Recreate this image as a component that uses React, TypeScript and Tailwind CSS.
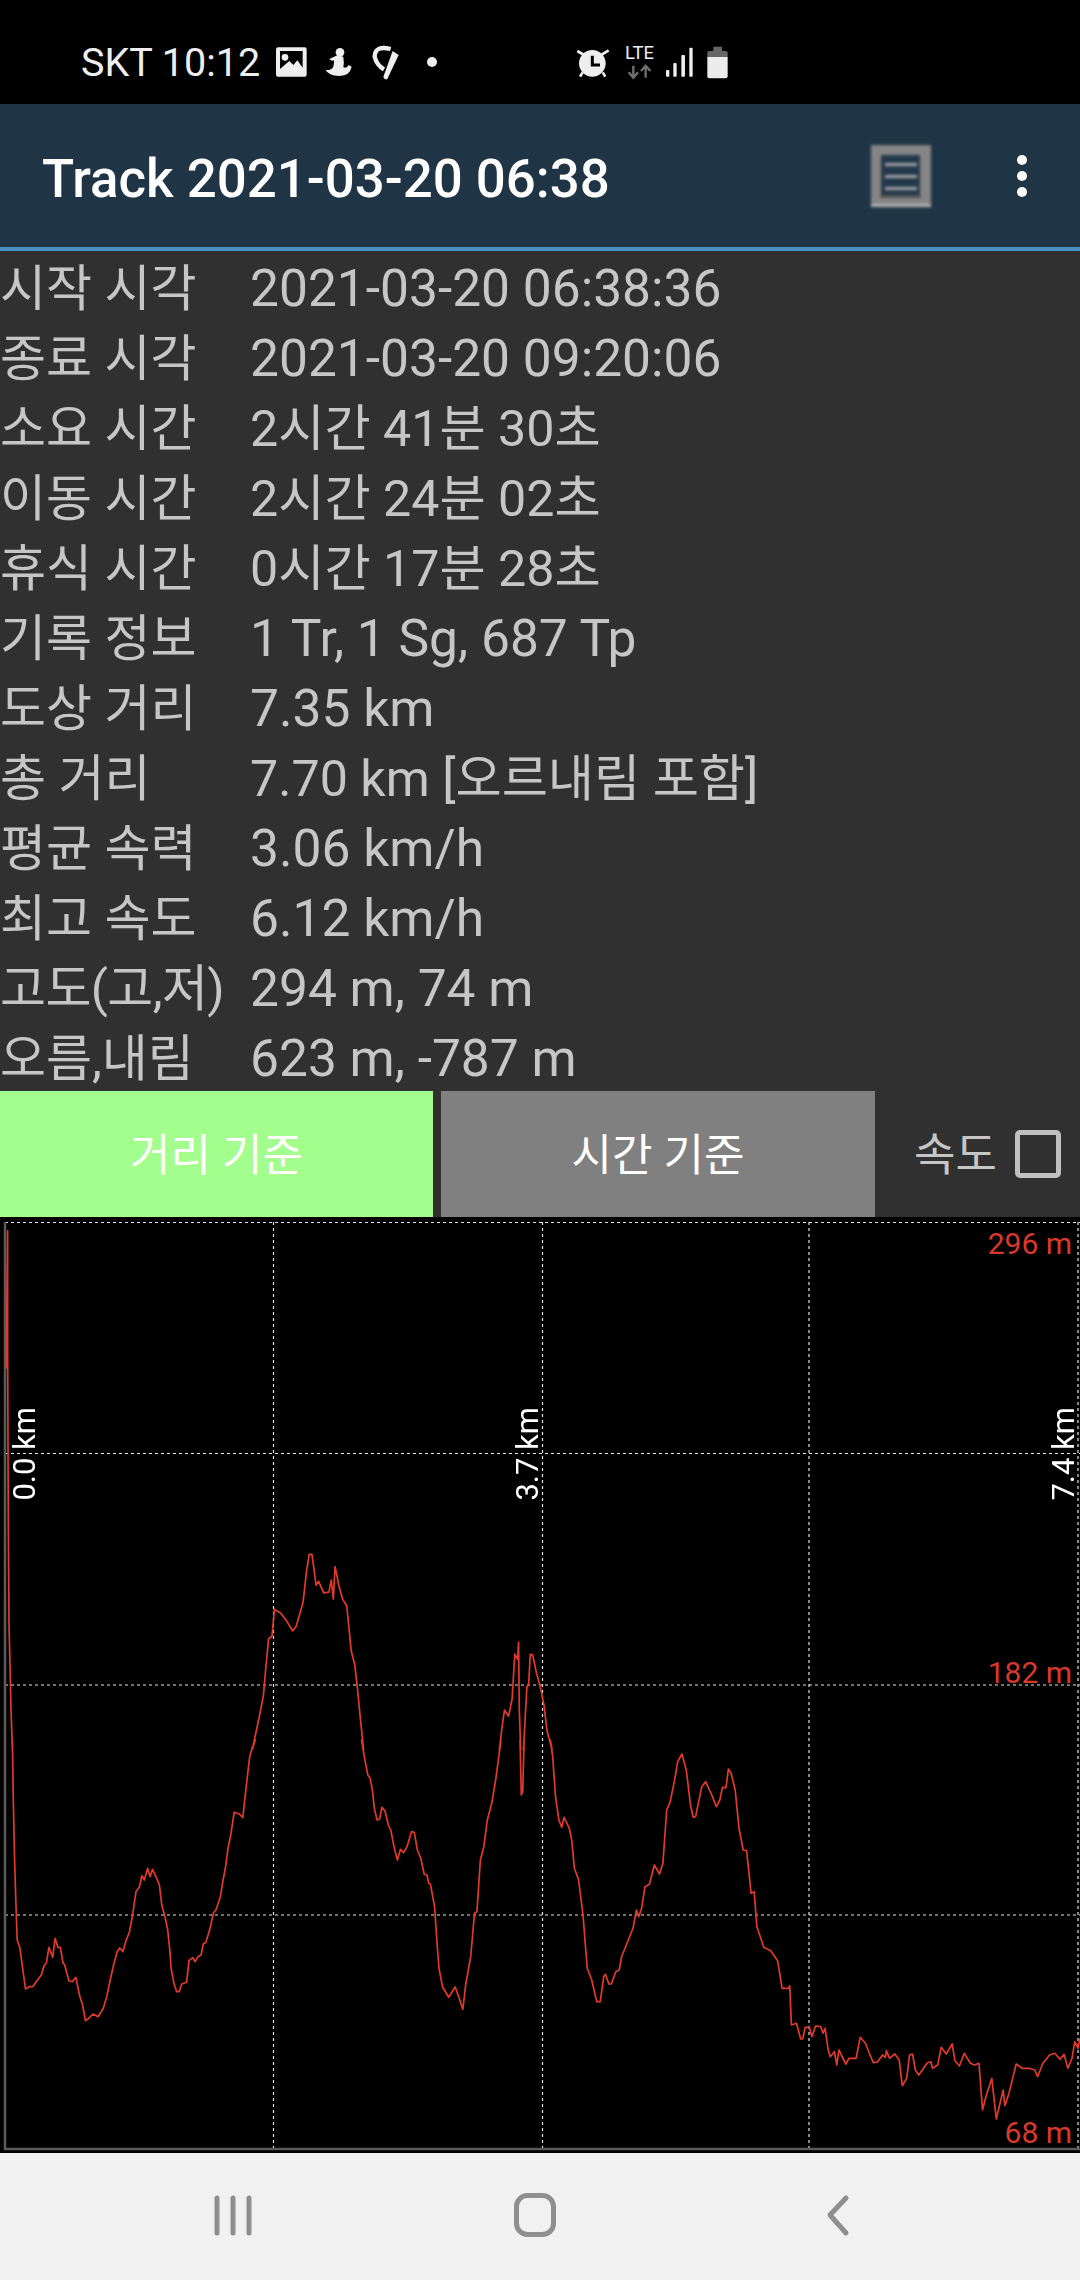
const rows = [
  ["시작 시각", "2021-03-20 06:38:36"],
  ["종료 시각", "2021-03-20 09:20:06"],
  ["소요 시간", "2시간 41분 30초"],
  ["이동 시간", "2시간 24분 02초"],
  ["휴식 시간", "0시간 17분 28초"],
  ["기록 정보", "1 Tr, 1 Sg, 687 Tp"],
  ["도상 거리", "7.35 km"],
  ["총 거리", "7.70 km [오르내림 포함]"],
  ["평균 속력", "3.06 km/h"],
  ["최고 속도", "6.12 km/h"],
  ["고도(고,저)", "294 m, 74 m"],
  ["오름,내림", "623 m, -787 m"],
];

// traced from the crops, so each run carries its own scale and offset
const CHART_TOP = 1217;
const runs: { sx: number; ox: number; sy: number; oy: number; pts: number[] }[] = [
  { sx: 2.904, ox: 0, sy: 2.904, oy: 1210, pts: [18,460, 22,60, 22,400, 24,900, 26,1200, 32,1450, 36,1568] },
  { sx: 2.904, ox: 0, sy: 3, oy: 1740, pts: [36,0, 38,150, 42,350, 46,480, 50,600, 58,625, 65,680, 74,747, 85,740, 95,740, 105,725, 120,705, 128,677, 135,668, 142,622, 153,652, 160,595, 168,622, 175,622, 183,668, 188,675, 200,722, 210,725, 220,712, 232,770, 240,795, 248,842, 258,835, 270,822, 285,830, 300,805, 310,770, 320,720, 330,675, 340,635, 348,624, 357,635, 365,605, 376,575, 385,525, 395,455, 405,440, 412,407, 419,420, 429,385, 436,410, 443,388, 455,415, 463,435, 470,495, 480,535, 487,570, 493,630, 497,685, 505,730, 513,755, 520,755, 528,732, 542,727, 549,662, 560,653, 567,665, 575,650, 584,645, 590,612, 598,607, 610,565, 620,518, 627,510, 640,470, 648,420, 655,380, 662,325, 670,285, 680,217, 695,222, 705,233, 715,140, 725,50, 732,25, 741,0] },
  { sx: 2.904, ox: 0, sy: 2.904, oy: 1210, pts: [733,1565, 745,1510, 755,1462, 765,1410, 772,1330, 780,1245, 790,1238, 797,1160, 815,1170, 830,1190, 850,1222, 860,1210, 880,1140, 890,1050, 898,1000, 906,1000, 918,1090, 925,1078, 940,1112, 955,1110, 962,1075, 968,1130, 973,1036, 985,1095, 995,1130, 1007,1150, 1020,1280, 1030,1320, 1037,1380, 1047,1480, 1056,1568] },
  { sx: 2.904, ox: 0, sy: 3, oy: 1740, pts: [1050,0, 1058,50, 1068,105, 1075,115, 1082,155, 1087,205, 1095,240, 1102,238, 1109,202, 1118,213, 1128,255, 1135,270, 1145,325, 1154,360, 1163,328, 1172,338, 1182,320, 1195,275, 1203,277, 1212,330, 1222,355, 1232,403, 1240,405, 1245,430, 1250,432, 1262,500, 1270,620, 1275,685, 1285,740, 1303,772, 1322,741, 1332,770, 1344,808, 1353,730, 1367,650, 1378,520, 1385,515, 1395,360, 1405,320, 1415,240, 1428,190, 1440,115, 1455,0] },
  { sx: 2.904, ox: 0, sy: 2.904, oy: 1210, pts: [1450,1568, 1457,1510, 1465,1452, 1477,1470, 1487,1420, 1495,1290, 1503,1305, 1506,1255, 1508,1450, 1512,1568] },
  { sx: 2.904, ox: 0, sy: 3, oy: 1740, pts: [1510,0, 1514,165, 1518,155, 1522,0] },
  { sx: 2.904, ox: 0, sy: 2.904, oy: 1210, pts: [1520,1568, 1530,1385, 1535,1380, 1540,1290, 1547,1292, 1558,1345, 1568,1380] },
  { sx: 2.904, ox: 540, sy: 2.904, oy: 1210, pts: [0,1380, 12,1440, 20,1510, 35,1568] },
  { sx: 2.904, ox: 540, sy: 3, oy: 1740, pts: [30,0, 37,50, 45,170, 55,240, 63,262, 70,232, 85,265, 92,300, 100,385, 112,420, 125,525, 137,685, 150,720, 165,785, 175,785, 185,710, 190,703, 200,732, 207,732, 220,695, 230,690, 237,650, 270,565, 280,510, 287,530, 295,505, 305,440, 318,433, 332,375, 347,402, 357,370, 368,210, 378,185, 390,125, 400,65, 412,42, 425,90, 437,195, 445,232, 452,230, 470,140, 481,125, 500,168, 512,200, 522,180, 530,142, 540,143, 547,87, 555,100, 567,150, 578,265, 590,330, 600,332, 613,460, 622,455, 630,560, 650,622, 670,632, 690,662, 703,745, 722,745, 725,737, 730,855, 745,850, 757,897, 763,897, 770,862, 782,862, 790,890, 800,858, 815,860, 822,880, 828,865, 837,930, 843,950, 855,935, 862,975, 868,930, 888,972, 897,955, 918,955, 930,892, 945,910, 968,968, 980,966, 995,945, 1003,952, 1006,932, 1015,955, 1030,942, 1043,960, 1052,1037, 1065,1015, 1073,945, 1082,942, 1090,990, 1100,1005, 1125,968, 1135,965, 1140,985, 1155,975, 1165,922, 1180,942, 1197,912, 1205,962, 1218,978, 1232,940, 1250,970, 1262,975, 1275,970, 1285,1110, 1295,1070, 1312,1015, 1325,1137, 1345,1050, 1350,1097, 1362,1060, 1383,972, 1400,985, 1420,985, 1437,990, 1445,1010, 1460,970, 1480,945, 1495,940, 1510,958, 1522,943, 1533,985, 1545,955, 1553,905, 1562,925, 1568,895] },
];

const elevation = runs
  .flatMap((r) => {
    const out: string[] = [];
    for (let i = 0; i < r.pts.length; i += 2) {
      out.push(`${(r.ox + r.pts[i] / r.sx).toFixed(1)},${(r.oy + r.pts[i + 1] / r.sy - CHART_TOP).toFixed(1)}`);
    }
    return out;
  })
  .join(" ");

function StatusIcons() {
  return (
    <svg width="480" height="50" viewBox="0 0 480 50" className="block shrink-0">
      {/* notification icons, drawn in 3x crop coordinates */}
      <g transform="translate(-16 -10) scale(0.3333)">
        <path fillRule="evenodd" d="M54 37 H134 Q140 37 140 43 V119 Q140 125 134 125 H54 Q48 125 48 119 V43 Q48 37 54 37 Z M60 48 V102 L88 78 L100 90 L112 76 L128 98 V48 Z" fill="#eee" />
        <circle cx="75" cy="67" r="10" fill="#eee" />
        <circle cx="240" cy="52" r="13" fill="#eee" />
        <path d="M208 72 L232 61 L250 65 Q253 85 250 97 Q262 101 265 90 L275 95 Q270 122 238 123 Q205 122 197 105 Q215 106 220 95 Q223 85 222 76 Q215 80 208 72 Z" fill="#eee" />
        <path d="M392 42 Q345 30 344 65 Q350 90 372 103" stroke="#eee" strokeWidth="13" fill="none" />
        <path d="M398 48 L416 60 L382 132 Q374 136 370 126 Z" fill="#eee" />
      </g>
      <circle cx="156" cy="17" r="5" fill="#eee" />
      {/* system icons */}
      <g transform="translate(284 -10) scale(0.3333)">
        <circle cx="97" cy="85" r="40" fill="#eee" />
        <path d="M97 62 V90 H120" stroke="#000" strokeWidth="9" fill="none" />
        <path d="M52 48 L72 60 M146 46 L124 60 M68 112 L60 125 M128 112 L136 125" stroke="#eee" strokeWidth="8" />
        <path d="M220 92 V128 M206 112 L220 128 L234 112 M257 128 V92 M243 108 L257 92 L271 108" stroke="#707070" strokeWidth="7" fill="none" />
        <rect x="318" y="105" width="10" height="20" rx="3" fill="#eee" />
        <rect x="340" y="84" width="10" height="41" rx="3" fill="#eee" />
        <rect x="364" y="60" width="11" height="65" rx="3" fill="#eee" />
        <rect x="388" y="38" width="10" height="87" rx="3" fill="#eee" />
        <path d="M460 35 H486 V48 H497 Q503 48 503 54 V66 H442 V54 Q442 48 448 48 H460 Z" fill="#666" />
        <path d="M442 66 H503 V124 Q503 130 497 130 H448 Q442 130 442 124 Z" fill="#ececec" />
      </g>
    </svg>
  );
}

function ListIcon() {
  return (
    <svg width="60" height="62" viewBox="0 0 60 62" className="block blur-[1.5px]">
      <rect width="60" height="62" fill="#858585" />
      <rect y="59" width="60" height="3" fill="#b5b5b5" />
      <rect x="10" y="10" width="39" height="42" fill="#23394a" />
      <rect x="9" y="50" width="41" height="3" fill="#555" />
      <rect x="14" y="18" width="32" height="3" fill="#a5a5a5" />
      <rect x="14" y="30" width="32" height="3" fill="#a5a5a5" />
      <rect x="14" y="42" width="32" height="3" fill="#a5a5a5" />
    </svg>
  );
}

function Chart() {
  const hLines = [5.5, 236.5, 468, 698];
  const vLines = [273.5, 542.5, 809, 1078];
  return (
    <div className="relative h-[936px] bg-black">
      <svg width="1080" height="936" viewBox="0 0 1080 936" className="block">
        {hLines.map((y) => (
          <line key={y} x1="5" x2="1080" y1={y} y2={y} stroke="#e4e4e4" strokeWidth="1.2" strokeDasharray="3 3" />
        ))}
        {vLines.map((x) => (
          <line key={x} x1={x} x2={x} y1="5" y2="932" stroke="#e4e4e4" strokeWidth="1.2" strokeDasharray="3 3" />
        ))}
        <path d="M5 5 V932 H1080" stroke="#5a5a5a" strokeWidth="2.5" fill="none" />
        <polyline points={elevation} fill="none" stroke="#df3a2b" strokeWidth="1.7" strokeLinejoin="round" />
      </svg>

      <span className="absolute right-[8px] top-[9px] text-[30px] leading-[36px] text-[#d9392b]">296 m</span>
      <span className="absolute right-[8px] top-[438px] text-[30px] leading-[36px] text-[#d9392b]">182 m</span>
      <span className="absolute right-[8px] top-[898px] text-[30px] leading-[36px] text-[#d9392b]">68 m</span>

      <span className="absolute left-[10px] top-[190px] rotate-180 text-[31px] leading-[30px] text-white [writing-mode:vertical-rl]">0.0 km</span>
      <span className="absolute left-[513px] top-[190px] rotate-180 text-[31px] leading-[30px] text-white [writing-mode:vertical-rl]">3.7 km</span>
      <span className="absolute left-[1049px] top-[190px] rotate-180 text-[31px] leading-[30px] text-white [writing-mode:vertical-rl]">7.4 km</span>
    </div>
  );
}

export default function App() {
  return (
    <div className="flex h-[2280px] w-[1080px] flex-col overflow-hidden bg-[#303030] font-['Roboto','Noto_Sans_CJK_KR',sans-serif]">
      {/* Status bar */}
      <div className="flex h-[104px] items-start bg-black pl-[81px] pt-[43px] text-[#eeeeee]">
        <span className="w-[195px] text-[39.5px] leading-none">SKT 10:12</span>
        <div className="relative mt-[2px]">
          <StatusIcons />
          <span className="absolute left-[349px] top-[-2px] text-[18.5px] leading-[20px] text-[#eee]">LTE</span>
        </div>
      </div>

      {/* Toolbar */}
      <div className="flex h-[147px] items-center border-b-4 border-[#4a90c0] bg-[#1f3546] pl-[42px]">
        <h1 className="flex-1 pt-[8px] text-[52.8px] font-medium leading-none text-white">Track 2021-03-20 06:38</h1>
        <ListIcon />
        <div className="ml-[86px] mr-[53px] flex flex-col gap-[6px]">
          <span className="h-[10px] w-[10px] rounded-full bg-white" />
          <span className="h-[10px] w-[10px] rounded-full bg-white" />
          <span className="h-[10px] w-[10px] rounded-full bg-white" />
        </div>
      </div>

      {/* Track info */}
      <div className="flex flex-col text-[#c6c6c6]">
        {rows.map(([label, value]) => (
          <div key={label} className="flex h-[70px] items-center pt-[6px] text-[50px] leading-none">
            <span className={`w-[250px] shrink-0 whitespace-nowrap ${label.includes("(") ? "tracking-[-0.6px]" : ""}`}>{label}</span>
            <span className={/[가-힣]/.test(value) ? "text-[50.2px]" : "text-[51.5px]"}>{value}</span>
          </div>
        ))}
      </div>

      {/* Mode buttons */}
      <div className="flex h-[126px]">
        <div className="flex w-[433px] items-center justify-center bg-[#a4fe8e] pt-[4px] text-[44px] text-white">거리 기준</div>
        <div className="ml-[8px] flex w-[434px] items-center justify-center bg-[#808080] pt-[4px] text-[44px] text-white">시간 기준</div>
        <div className="flex flex-1 items-center pl-[39px]">
          <span className="pt-[4px] text-[45px] text-[#c6c6c6]">속도</span>
          <span className="ml-[18px] h-[48px] w-[46px] rounded-[5px] border-[5px] border-[#c0c0c0]" />
        </div>
      </div>

      <Chart />

      {/* Nav bar */}
      <div className="flex flex-1 justify-center bg-[#f1f1f1]">
        <svg width="1080" height="127" viewBox="0 0 1080 127" className="block">
          <path d="M217 45 V80 M233 45 V80 M249 45 V80" stroke="#8f8f8f" strokeWidth="5" strokeLinecap="round" />
          <rect x="516.5" y="42.5" width="37" height="39" rx="11" stroke="#8f8f8f" strokeWidth="5" fill="none" />
          <path d="M846 45 L830 62 L846 80" stroke="#8f8f8f" strokeWidth="5" strokeLinecap="round" strokeLinejoin="round" fill="none" />
        </svg>
      </div>
    </div>
  );
}
